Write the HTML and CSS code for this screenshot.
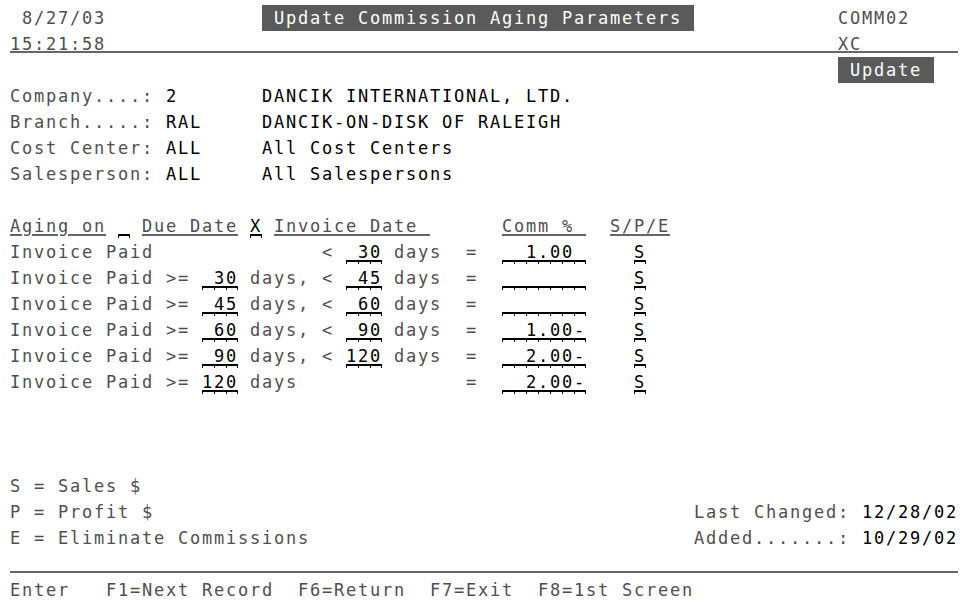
FILE: index.html
```html
<!DOCTYPE html>
<html lang="en">
<head>
<meta charset="utf-8">
<title>Update Commission Aging Parameters</title>
<link rel="stylesheet" href="styles.css">
</head>
<body>
<div class="screen">
<div class="row"> 8/27/03             <span class="title"> Update Commission Aging Parameters </span>            COMM02</div>
<div class="row ruled">15:21:58                                                             XC</div>
<div class="row">                                                                     <span class="badge"> Update </span></div>
<div class="row">Company....: <span class="v">2</span>       <span class="v">DANCIK INTERNATIONAL, LTD.</span></div>
<div class="row">Branch.....: <span class="v">RAL</span>     <span class="v">DANCIK-ON-DISK OF RALEIGH</span></div>
<div class="row">Cost Center: <span class="v">ALL</span>     <span class="v">All Cost Centers</span></div>
<div class="row">Salesperson: <span class="v">ALL</span>     <span class="v">All Salespersons</span></div>
<div class="row"> </div>
<div class="row"><span class="u">Aging on</span> <span class="fld"> </span> <span class="u">Due Date</span> <span class="fld">X</span> <span class="u">Invoice Date </span>      <span class="u">Comm % </span>  <span class="u">S/P/E</span></div>
<div class="row">Invoice Paid              &lt; <span class="fld"> 30</span> days  =  <span class="fld">  1.00 </span>    <span class="fld">S</span></div>
<div class="row">Invoice Paid &gt;= <span class="fld"> 30</span> days, &lt; <span class="fld"> 45</span> days  =  <span class="fld">       </span>    <span class="fld">S</span></div>
<div class="row">Invoice Paid &gt;= <span class="fld"> 45</span> days, &lt; <span class="fld"> 60</span> days  =  <span class="fld">       </span>    <span class="fld">S</span></div>
<div class="row">Invoice Paid &gt;= <span class="fld"> 60</span> days, &lt; <span class="fld"> 90</span> days  =  <span class="fld">  1.00-</span>    <span class="fld">S</span></div>
<div class="row">Invoice Paid &gt;= <span class="fld"> 90</span> days, &lt; <span class="fld">120</span> days  =  <span class="fld">  2.00-</span>    <span class="fld">S</span></div>
<div class="row">Invoice Paid &gt;= <span class="fld">120</span> days              =  <span class="fld">  2.00-</span>    <span class="fld">S</span></div>
<div class="row"> </div>
<div class="row"> </div>
<div class="row"> </div>
<div class="row">S = Sales $</div>
<div class="row">P = Profit $                                             Last Changed: <span class="v">12/28/02</span></div>
<div class="row">E = Eliminate Commissions                                Added.......: <span class="v">10/29/02</span></div>
<div class="row ruled"> </div>
<div class="row">Enter   F1=Next Record  F6=Return  F7=Exit  F8=1st Screen</div>
</div>
</body>
</html>
```
FILE: styles.css
```css
html, body {
  margin: 0;
  background: #ffffff;
}

.screen {
  padding: 5px 0 0 10px;
  font-family: "DejaVu Sans Mono", monospace;
  font-size: 17px;
  letter-spacing: calc(12px - 1ch);
  color: #4f4f4f;
}

.row {
  height: 26px;
  line-height: 26px;
  white-space: pre;
}

.ruled {
  background: linear-gradient(#666666, #666666) no-repeat 0 20px / 948px 2px;
}

.v {
  color: #000000;
}

.u {
  text-decoration: underline;
  text-decoration-color: #666666;
  text-decoration-thickness: 2px;
  text-underline-offset: 2px;
}

.title,
.badge {
  display: inline-block;
  background: #5a5a5a;
  color: #ffffff;
}

.fld {
  display: inline-block;
  color: #000000;
  background:
    linear-gradient(#000, #000) no-repeat 0 21px / 100% 2px,
    repeating-linear-gradient(to right, #000 0 1px, transparent 1px 12px) no-repeat 0 21px / 100% 4px,
    linear-gradient(#000, #000) no-repeat right 21px / 1px 4px;
}
```
